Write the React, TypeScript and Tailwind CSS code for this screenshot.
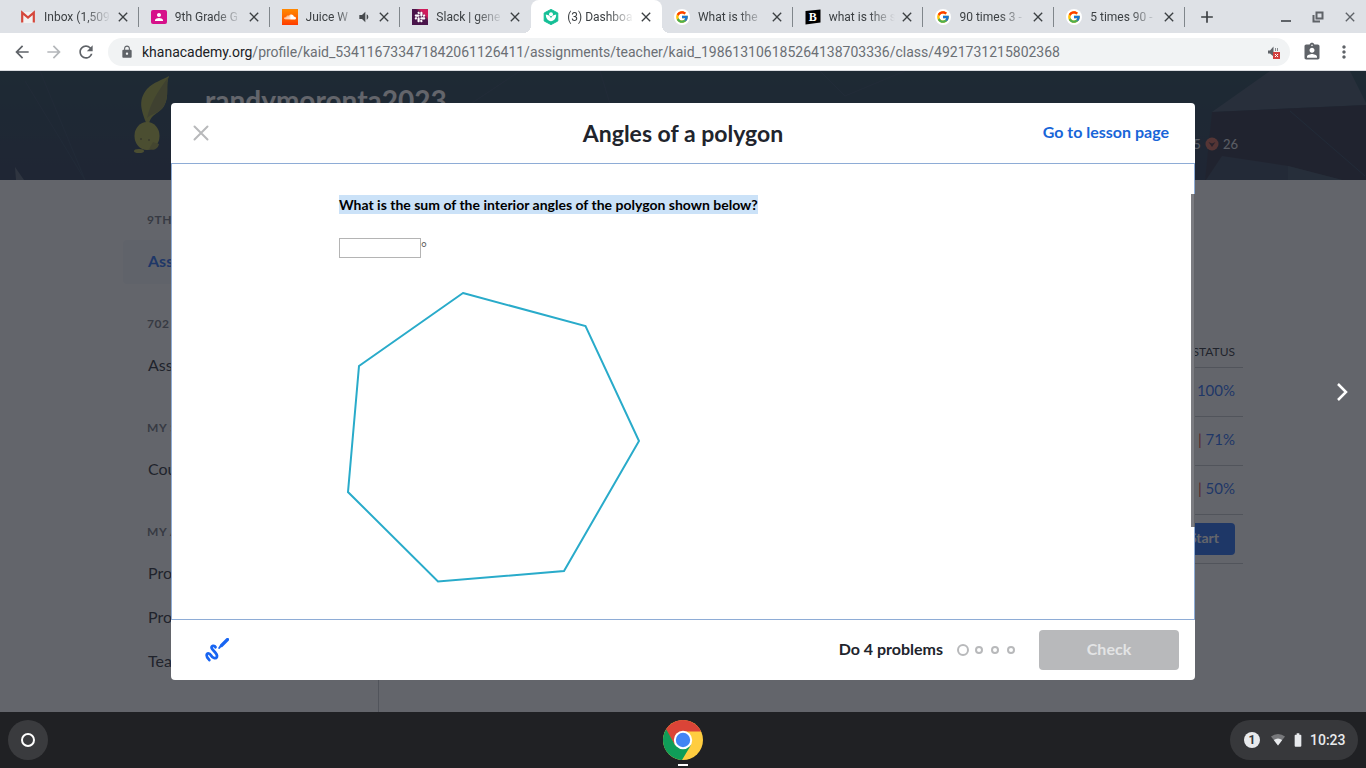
import type { ReactNode } from "react";
import { clsx } from "clsx";
import { FcGoogle } from "react-icons/fc";
import { FaSoundcloud, FaSlack } from "react-icons/fa";
import {
  MdAdd,
  MdArrowBack,
  MdArrowForward,
  MdAssignmentInd,
  MdBatteryFull,
  MdClose,
  MdLock,
  MdMoreVert,
  MdPerson,
  MdRefresh,
  MdVolumeDown,
} from "react-icons/md";

interface Tab {
  title: string;
  icon: ReactNode;
  active?: boolean;
  audio?: boolean;
}

function GmailIcon() {
  return (
    <svg viewBox="0 0 16 16" className="size-4">
      <path d="M2 3h12v11H2z" fill="#f1f1f1" />
      <path d="M2.2 13.6V3.6L8 8.6l5.800-5v10" fill="none" stroke="#d5473b" strokeWidth="2.2" />
    </svg>
  );
}

function ClassroomIcon() {
  return (
    <span className="flex h-3.5 w-4 items-center justify-center rounded-xs bg-[#d6118a]">
      <MdPerson className="size-3 text-white" />
    </span>
  );
}

function SoundcloudIcon() {
  return (
    <span className="flex size-4 items-center justify-center bg-linear-to-b from-[#ff8800] to-[#ff3a00]">
      <FaSoundcloud className="size-3 text-white" />
    </span>
  );
}

function SlackIcon() {
  return (
    <span className="flex size-4 items-center justify-center bg-linear-to-bl from-[#d01c5c] from-25% to-[#4a154b] to-40%">
      <FaSlack className="size-3 text-white" />
    </span>
  );
}

function KhanIcon() {
  return (
    <svg viewBox="0 0 16 16" className="size-4">
      <path d="M8 .4 14.8 4v8L8 15.600 1.200 12V4z" fill="#14bf96" stroke="#14bf96" strokeLinejoin="round" />
      <circle cx="8" cy="5.200" r="2" fill="#fff" />
      <path d="M2.800 5.600c0 3.800 2.200 6.600 5.200 6.600s5.200-2.800 5.200-6.600C10.400 5.800 8.400 7.400 8 9.400 7.600 7.400 5.600 5.800 2.800 5.600z" fill="#fff" />
    </svg>
  );
}

function GoogleIcon() {
  return (
    <span className="flex size-4 items-center justify-center rounded-full bg-white">
      <FcGoogle className="size-3.5" />
    </span>
  );
}

function BrainlyIcon() {
  return (
    <span className="relative flex size-4 items-center justify-center">
      <svg viewBox="0 0 16 16" className="absolute inset-0 size-4">
        <path d="M.5 2 15.500.5v13L.5 15.500z" fill="#000" />
      </svg>
      <span className="relative font-['Liberation_Serif',serif] text-xs leading-none font-bold text-white">B</span>
    </span>
  );
}

const tabs: Tab[] = [
  { title: "Inbox (1,509", icon: <GmailIcon /> },
  { title: "9th Grade G", icon: <ClassroomIcon /> },
  { title: "Juice W", icon: <SoundcloudIcon />, audio: true },
  { title: "Slack | gene", icon: <SlackIcon /> },
  { title: "(3) Dashboa", icon: <KhanIcon />, active: true },
  { title: "What is the", icon: <GoogleIcon /> },
  { title: "what is the s", icon: <BrainlyIcon /> },
  { title: "90 times 3 -", icon: <GoogleIcon /> },
  { title: "5 times 90 -", icon: <GoogleIcon /> },
];

function BrowserTab({ tab, divider }: { tab: Tab; divider: boolean }) {
  return (
    <div
      className={clsx(
        "relative flex min-w-0 flex-1 items-center pr-2 pl-3",
        tab.active &&
          "rounded-t-lg bg-white before:absolute before:bottom-0 before:-left-2 before:size-2 before:bg-[radial-gradient(circle_at_0_0,transparent_8px,white_8px)] after:absolute after:-right-2 after:bottom-0 after:size-2 after:bg-[radial-gradient(circle_at_100%_0,transparent_8px,white_8px)]"
      )}
    >
      <span className="shrink-0">{tab.icon}</span>
      <span className="ml-2 min-w-0 flex-1 overflow-hidden mask-r-from-60% text-xs whitespace-nowrap text-[#3c4043]">
        {tab.title}
      </span>
      {tab.audio && <MdVolumeDown className="size-4 shrink-0 text-[#45494d]" />}
      <button aria-label="Close tab" className="ml-1 shrink-0">
        <MdClose className="size-4 text-[#3c4043]" />
      </button>
      {divider && <span className="absolute right-0 h-5 w-px bg-[#80868b]" />}
    </div>
  );
}

function TabStrip() {
  return (
    <div className="flex h-[33px] shrink-0 items-stretch bg-[#dee1e6] pl-2">
      <div className="flex w-[1177px] min-w-0">
        {tabs.map((tab, i) => (
          <BrowserTab key={i} tab={tab} divider={!tab.active && !tabs[i + 1]?.active} />
        ))}
      </div>
      <button aria-label="New tab" className="ml-3">
        <MdAdd className="size-5 text-[#3c4043]" />
      </button>
      <div className="ml-auto flex items-center gap-4 pr-2 text-[#5f6368]">
        <button aria-label="Minimize">
          <svg viewBox="0 0 16 16" className="size-4">
            <path d="M3 12h10" stroke="currentColor" strokeWidth="2" />
          </svg>
        </button>
        <button aria-label="Restore">
          <svg viewBox="0 0 16 16" className="size-4" fill="none" stroke="currentColor" strokeWidth="2">
            <path d="M6.500 3.500h6v6h-6zM3.500 6v6.500H10" />
          </svg>
        </button>
        <button aria-label="Close window">
          <MdClose className="size-4" />
        </button>
      </div>
    </div>
  );
}

function Toolbar() {
  return (
    <div className="flex h-[38px] shrink-0 items-center border-b border-[#dadce0] bg-white px-3 text-[#5f6368]">
      <div className="flex items-center gap-3">
        <button aria-label="Back">
          <MdArrowBack className="size-5" />
        </button>
        <button aria-label="Forward" className="text-[#b4b7ba]">
          <MdArrowForward className="size-5" />
        </button>
        <button aria-label="Reload">
          <MdRefresh className="size-5" />
        </button>
      </div>
      <div className="ml-3 flex h-7 min-w-0 flex-1 items-center rounded-full bg-[#f1f3f4] pr-2 pl-3">
        <MdLock className="mr-2 size-3.5 shrink-0" />
        <span className="min-w-0 flex-1 truncate text-sm text-[#6b6f74]">
          <span className="text-[#202124]">khanacademy.org</span>
          /profile/kaid_534116733471842061126411/assignments/teacher/kaid_198613106185264138703336/class/4921731215802368
        </span>
        <svg viewBox="0 0 16 16" className="size-4 shrink-0">
          <path d="M2 6.500h2L7.500 2.500v10L4 9.500H2z" fill="#5f6368" />
          <path d="M9.500 4v3M11.500 4v3" stroke="#8a8e92" />
          <path d="M7 8h7v7H7z" fill="#d23f3f" />
          <path d="m9 10 3 3m0-3-3 3" stroke="#fff" />
        </svg>
      </div>
      <button aria-label="Account" className="ml-3">
        <MdAssignmentInd className="size-5" />
      </button>
      <button aria-label="Menu" className="ml-3">
        <MdMoreVert className="size-5" />
      </button>
    </div>
  );
}

const sidebarGroups = [
  { heading: "9TH GRADE", links: ["Assignments"] },
  { heading: "702", links: ["Assignments"] },
  { heading: "MY STUFF", links: ["Courses"] },
  { heading: "MY ACCOUNT", links: ["Progress", "Profile", "Teachers"] },
];

const scores = ["100%", "71%", "50%"];

function Avatar() {
  return (
    <svg viewBox="0 0 40 80" className="mt-1 h-20 w-10 shrink-0">
      <path d="M14 50C9 37 4 26 14 14 21 7 29 5 36 1c-4 8 1 20-5 30-5 8-14 8-15 19z" fill="#a5a938" />
      <path d="M36 1c-4 8 1 20-5 30-5 8-13 8-17 12 4-16 9-24 22-42z" fill="#85883a" />
      <ellipse cx="14" cy="61" rx="12.500" ry="14" fill="#b0b23c" />
      <ellipse cx="6" cy="76" rx="5" ry="2" fill="#b0b23c" />
      <path d="M16 74c4 2 9 0 10-5l-6-2z" fill="#96983a" />
      <circle cx="8" cy="64" r="1" fill="#6d6d2a" />
      <circle cx="16" cy="65" r="1" fill="#6d6d2a" />
    </svg>
  );
}

function Banner() {
  return (
    <header className="relative h-[109px] bg-linear-to-b from-[#183a46] to-[#1c2c48]">
      <svg viewBox="0 0 1366 109" preserveAspectRatio="none" className="absolute inset-0 size-full">
        <path d="M1212 41 1270 0h80l16 32v2z" fill="#3a4c60" />
        <path d="M1212 41 1366 34v75H1205z" fill="#1f2438" />
        <path d="m1206 109 16-24 66 10 54 14z" fill="#2b3a50" />
        <path d="m1288 95 54 14h-54z" fill="#34485a" />
        <path d="m15 96 9 13h-8z" fill="#506070" />
        <path
          d="m25 10 60 99M40 0l45 109M520 0l-60 40M600 0l10 33M820 0l25 25 60-25M1290 40l75 65"
          stroke="#243c54"
          fill="none"
        />
      </svg>
      <div className="relative mx-auto flex max-w-[1120px] items-start pr-[5px] pl-2.5">
        <Avatar />
        <h1 className="ml-8 pt-3 text-[28px] leading-[34px] font-bold text-white">randymoronta2023</h1>
        <p className="ml-auto flex items-center gap-1 pt-16 text-[13px] leading-[18px] text-[#e2e4e8]">
          5
          <svg viewBox="0 0 14 14" className="size-3.5">
            <circle cx="7" cy="7" r="6.500" fill="#d0604a" />
            <path d="M3.500 5 7 10l3.500-5L7 6.500z" fill="#3c1f2c" />
          </svg>
          26
        </p>
      </div>
    </header>
  );
}

function ProfilePage() {
  return (
    <div className="absolute inset-0 flex flex-col overflow-hidden bg-white text-[#21242c]">
      <Banner />
      <div className="mx-auto flex w-full max-w-[1120px] flex-1">
        <nav className="w-64 shrink-0 border-r border-[#c4c6ca]">
          {sidebarGroups.map((group, i) => (
            <div key={group.heading}>
              <h2 className="px-6 pt-8 pb-3 text-xs leading-4 font-bold tracking-wider text-[#6c7078]">
                {group.heading}
              </h2>
              {group.links.map((link) => (
                <a
                  key={link}
                  href="#"
                  className={clsx(
                    "block h-11 px-[25px] text-base leading-[42px]",
                    i === 0 && "rounded-sm bg-[#f5f7fb] font-bold text-[#1865f2]"
                  )}
                >
                  {link}
                </a>
              ))}
            </div>
          ))}
        </nav>
        <main className="flex-1 pt-[157px] pl-8">
          <table className="w-full text-right">
            <thead>
              <tr className="h-[30px] border-b border-[#c4c6ca] text-xs">
                <th className="pr-2 text-right font-normal">STATUS</th>
              </tr>
            </thead>
            <tbody>
              {scores.map((score, i) => (
                <tr key={score} className="h-[49px] border-b border-[#c4c6ca] text-[15px] leading-5">
                  <td className="pr-2 pb-1">
                    {i > 0 && <span className="text-[#d92916]">| </span>}
                    <a href="#" className="text-[#1865f2]">
                      {score}
                    </a>
                  </td>
                </tr>
              ))}
              <tr className="h-[49px] border-b border-[#c4c6ca]">
                <td className="pr-2">
                  <button className="h-8 rounded-sm bg-[#1865f2] px-4 pb-0.5 text-sm font-bold text-white">Start</button>
                </td>
              </tr>
            </tbody>
          </table>
        </main>
      </div>
    </div>
  );
}

function ScratchpadIcon() {
  return (
    <svg viewBox="0 0 24 24" className="size-6" fill="none" stroke="#1865f2" strokeLinecap="round" strokeLinejoin="round">
      <path
        d="M10.500 9.200C9.500 7 6 7.500 6.600 10c.5 2.200 6.600 5.600 5.300 8.800-1.200 2.600-4.400 1-6-1.600C4.600 15 1.600 14.600 1.700 17.500c.1 2 1.500 3 2.600 4.500"
        strokeWidth="2.800"
      />
      <path d="m16.500 7.500 6-6" strokeWidth="3.200" />
      <path d="m14.200 10 1.200-1.600" strokeWidth="2" />
    </svg>
  );
}

function ExerciseDialog() {
  return (
    <section
      role="dialog"
      aria-label="Angles of a polygon"
      className="flex h-full flex-col overflow-hidden rounded-sm bg-white text-[#21242c]"
    >
      <header className="grid h-[60px] shrink-0 grid-cols-[1fr_auto_1fr] items-center px-[18px]">
        <button aria-label="Close" className="justify-self-start">
          <svg viewBox="0 0 24 24" className="size-6">
            <path d="m5.500 5.500 13 13m0-13-13 13" stroke="#b8b9bb" strokeWidth="2" strokeLinecap="round" />
          </svg>
        </button>
        <h2 className="text-[23px] leading-8 font-bold">Angles of a polygon</h2>
        <a href="#" className="mr-2 justify-self-end pb-0.5 text-base font-bold text-[#1865d8]">
          Go to lesson page
        </a>
      </header>

      <div className="relative min-h-0 flex-1 border border-[#8eacd6]">
        <div className="mx-auto max-w-[688px] pt-8">
          <label htmlFor="answer" className="block text-sm leading-[18px] font-bold text-black">
            <span className="bg-[#cbe2f8] py-px">What is the sum of the interior angles of the polygon shown below?</span>
          </label>
          <div className="mt-6 flex">
            <input id="answer" type="text" className="h-5 w-[82px] border border-[#b4b4b4] px-1 text-sm outline-none" />
            <span className="text-sm leading-[18px] text-[#666]">°</span>
          </div>
          <svg viewBox="0 0 310 310" className="mt-6 size-[310px]">
            <polygon
              points="124,11 246.500,44 300,159 225,289 99,299.500 9,210 20,84"
              fill="none"
              stroke="#29abca"
              strokeWidth="2"
            />
          </svg>
        </div>
        <div className="absolute top-[30px] -right-px h-[333px] w-1 border-r border-[#626469] bg-[#7b7c81]" />
      </div>

      <footer className="flex h-[60px] shrink-0 items-center pr-4 pl-[34px]">
        <button aria-label="Scratchpad">
          <ScratchpadIcon />
        </button>
        <span className="ml-auto pb-0.5 text-base font-bold">Do 4 problems</span>
        <div className="ml-3.5 flex items-center gap-2">
          <span className="-mr-0.5 size-3 rounded-full border-2 border-[#b8b9bb]" />
          {[2, 3, 4].map((n) => (
            <span key={n} className="size-2 rounded-full border-2 border-[#b8b9bb]" />
          ))}
        </div>
        <button disabled className="ml-6 h-10 w-[140px] rounded-sm bg-[#b8b9bb] pb-0.5 text-base font-bold text-[#e3e4e5]">
          Check
        </button>
      </footer>
    </section>
  );
}

function ChromeIcon() {
  return (
    <svg viewBox="0 0 40 40" className="size-10">
      <circle cx="20" cy="20" r="20" fill="#ffcd40" />
      <path d="M2.700 10a20 20 0 0 1 34.600 0L38 11.500H20L12 25z" fill="#db4437" />
      <path d="M3.200 9.200A20 20 0 0 0 19 40l9-15-8 4-8-4z" fill="#0f9d58" />
      <circle cx="20" cy="20" r="9.200" fill="#fff" />
      <circle cx="20" cy="20" r="7.200" fill="#4285f4" />
    </svg>
  );
}

function Shelf() {
  return (
    <footer className="grid h-14 shrink-0 grid-cols-3 items-center bg-[#202124] px-2">
      <button aria-label="Launcher" className="flex size-10 items-center justify-center rounded-full bg-[#3a3b3e]">
        <span className="size-3.5 rounded-full border-2 border-white" />
      </button>
      <button aria-label="Chrome" className="relative justify-self-center">
        <ChromeIcon />
        <span className="absolute -bottom-1.5 left-1/2 h-0.5 w-2.5 -translate-x-1/2 bg-white" />
      </button>
      <div className="flex h-10 w-32 items-center justify-self-end rounded-full bg-[#37383b] pl-3.5 text-[#e8eaed]">
        <span className="flex size-4 items-center justify-center rounded-full bg-[#e8eaed] text-xs font-bold text-[#37383b]">
          1
        </span>
        <svg viewBox="0 0 16 16" className="ml-2.5 size-4">
          <path d="M1 4.500a11 11 0 0 1 14 0L8 13.500z" fill="#77787b" />
          <path d="M3.800 8a7 7 0 0 1 8.400 0L8 13.500z" fill="#e8eaed" />
        </svg>
        <MdBatteryFull className="ml-1 size-4" />
        <span className="ml-1 text-sm font-medium">10:23</span>
      </div>
    </footer>
  );
}

export default function App() {
  return (
    <div className="flex h-screen flex-col overflow-hidden font-['Roboto',sans-serif]">
      <TabStrip />
      <Toolbar />
      <div className="relative min-h-0 flex-1 font-['Lato',sans-serif]">
        <ProfilePage />
        <div className="absolute inset-0 grid grid-cols-[1fr_minmax(0,1024px)_1fr] bg-[#21242c]/70 py-8">
          <div />
          <ExerciseDialog />
          <button aria-label="Next" className="self-center justify-self-end pr-3">
            <svg viewBox="0 0 24 24" className="size-6">
              <path d="m8 4 8 8-8 8" fill="none" stroke="#fff" strokeWidth="2.500" />
            </svg>
          </button>
        </div>
      </div>
      <Shelf />
    </div>
  );
}
